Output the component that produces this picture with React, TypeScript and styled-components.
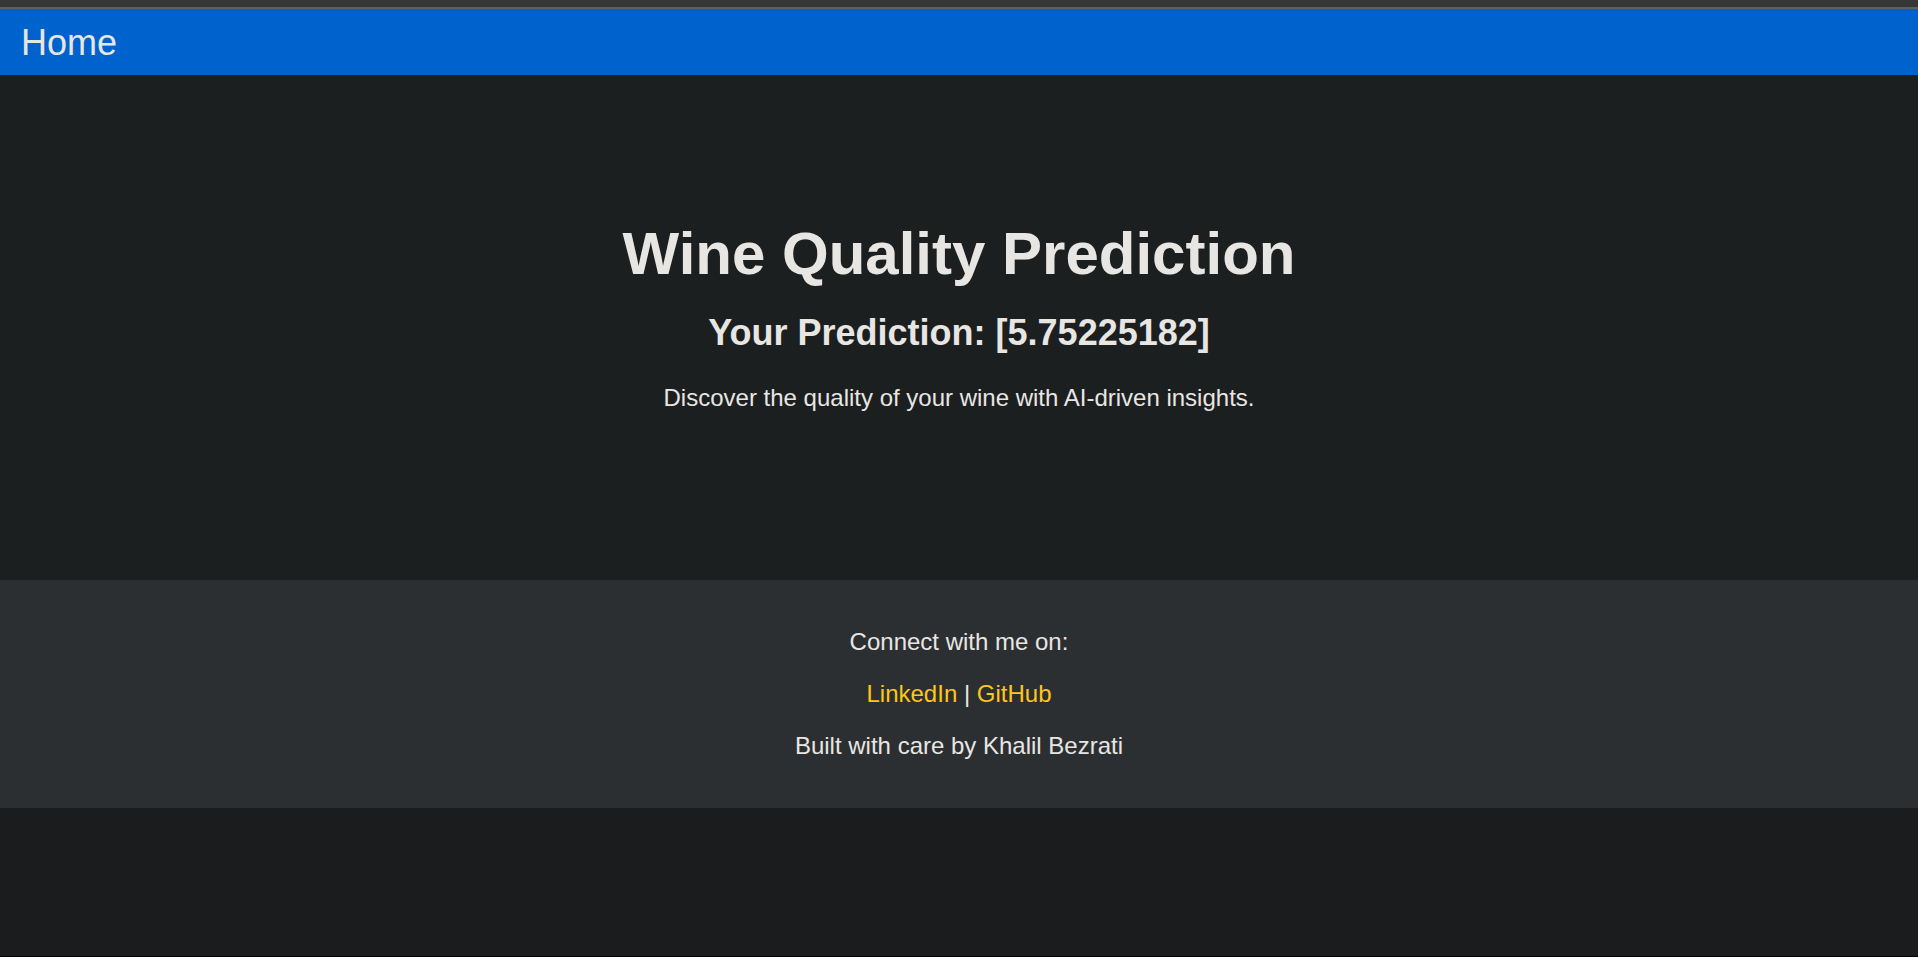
import React from "react";
import styled, { createGlobalStyle } from "styled-components";

const GlobalStyle = createGlobalStyle`
  html, body {
    margin: 0;
    padding: 0;
    background: #1b1c1d;
  }
  body {
    font-family: "Liberation Sans", Arial, sans-serif;
    color: #e8e6e3;
  }
  * { box-sizing: border-box; }
`;

const Page = styled.div`
  min-height: 100vh;
  display: flex;
  flex-direction: column;
  background: #1b1c1d;
  border-bottom: 1px solid #000;
`;

const ChromeEdge = styled.div`
  height: 9px;
  background: #363636;
  border-bottom: 2px solid #5f5f5f;
`;

const NavBar = styled.nav`
  height: 66px;
  background: #0062cc;
  display: flex;
  align-items: flex-start;
  padding: 12.9px 0 0 21px;
`;

const Brand = styled.a`
  font-size: 36px;
  line-height: normal;
  color: #e8e6e3;
  text-decoration: none;
`;

const Hero = styled.header`
  background: #1c1f20;
  display: flex;
  flex-direction: column;
  align-items: center;
  text-align: center;
  padding: 142.7px 0 0;
  height: 505px;
`;

const Title = styled.h1`
  margin: 0;
  font-size: 60px;
  line-height: 1.2;
  font-weight: 700;
  color: #e8e6e3;
`;

const Subtitle = styled.h2`
  margin: 21.7px 0 0;
  font-size: 36px;
  line-height: 1.2;
  font-weight: 700;
  color: #e8e6e3;
`;

const Lead = styled.p`
  margin: 29.7px 0 0;
  font-size: 24px;
  line-height: 1.2;
  color: #e8e6e3;
`;

const Footer = styled.footer`
  background: #2c2f31;
  height: 228px;
  display: flex;
  flex-direction: column;
  align-items: center;
  gap: 25.5px;
  padding-top: 48.5px;
  text-align: center;
`;

const FooterLine = styled.p`
  margin: 0;
  font-size: 24px;
  line-height: 26.8px;
  color: #e8e6e3;
`;

const Link = styled.a`
  color: #fec51b;
  text-decoration: none;
`;

export default function App() {
  return (
    <>
      <GlobalStyle />
      <Page>
        <ChromeEdge />
        <NavBar>
          <Brand href="#">Home</Brand>
        </NavBar>
        <Hero>
          <Title>Wine Quality Prediction</Title>
          <Subtitle>Your Prediction: [5.75225182]</Subtitle>
          <Lead>Discover the quality of your wine with AI-driven insights.</Lead>
        </Hero>
        <Footer>
          <FooterLine>Connect with me on:</FooterLine>
          <FooterLine>
            <Link href="#">LinkedIn</Link> | <Link href="#">GitHub</Link>
          </FooterLine>
          <FooterLine>Built with care by Khalil Bezrati</FooterLine>
        </Footer>
      </Page>
    </>
  );
}
